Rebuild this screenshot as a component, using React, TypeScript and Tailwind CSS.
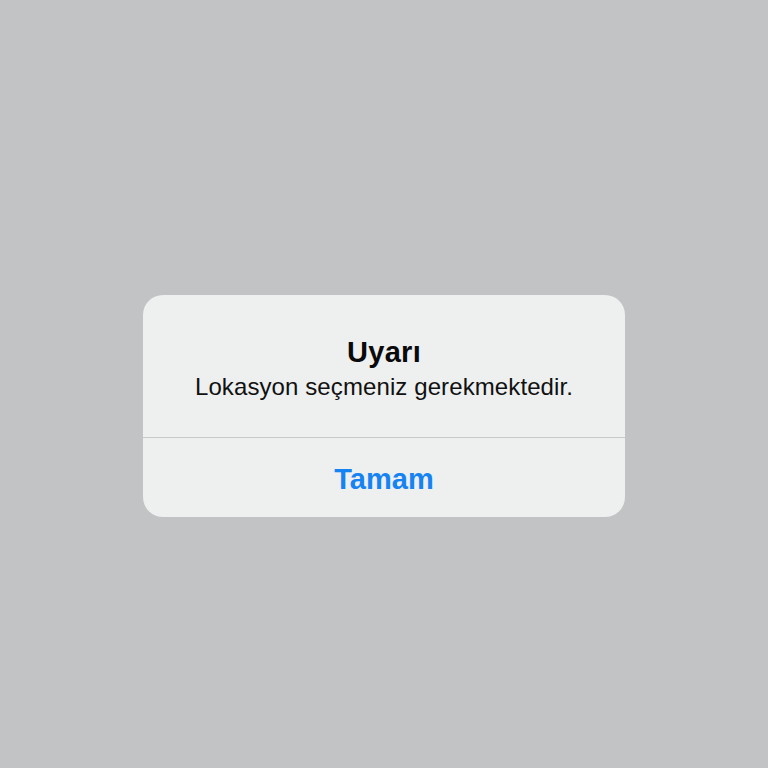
export default function App() {
  return (
    <div
      className="flex h-[768px] w-full flex-col items-center bg-[#c2c3c5] pt-[295px]"
      style={{ fontFamily: '"Liberation Sans", Arial, sans-serif' }}
    >
      <div className="flex w-[482px] flex-col overflow-hidden rounded-[20px] bg-[#eeefef]">
        <div className="flex flex-col items-center px-6 pt-[40px] pb-[35px] text-center">
          <h1 className="text-[29px] font-bold leading-[34px] tracking-[0.3px] text-[#0a0a0a]">Uyarı</h1>
          <p className="mt-[3px] text-[24px] leading-[30px] tracking-[0.1px] text-[#111111]">
            Lokasyon seçmeniz gerekmektedir.
          </p>
        </div>
        <div className="h-px bg-[#c9c9cb]" />
        <button className="flex h-[79px] items-center justify-center pt-[2px] text-[29px] font-bold leading-[34px] text-[#1683f3]">
          Tamam
        </button>
      </div>
    </div>
  );
}
